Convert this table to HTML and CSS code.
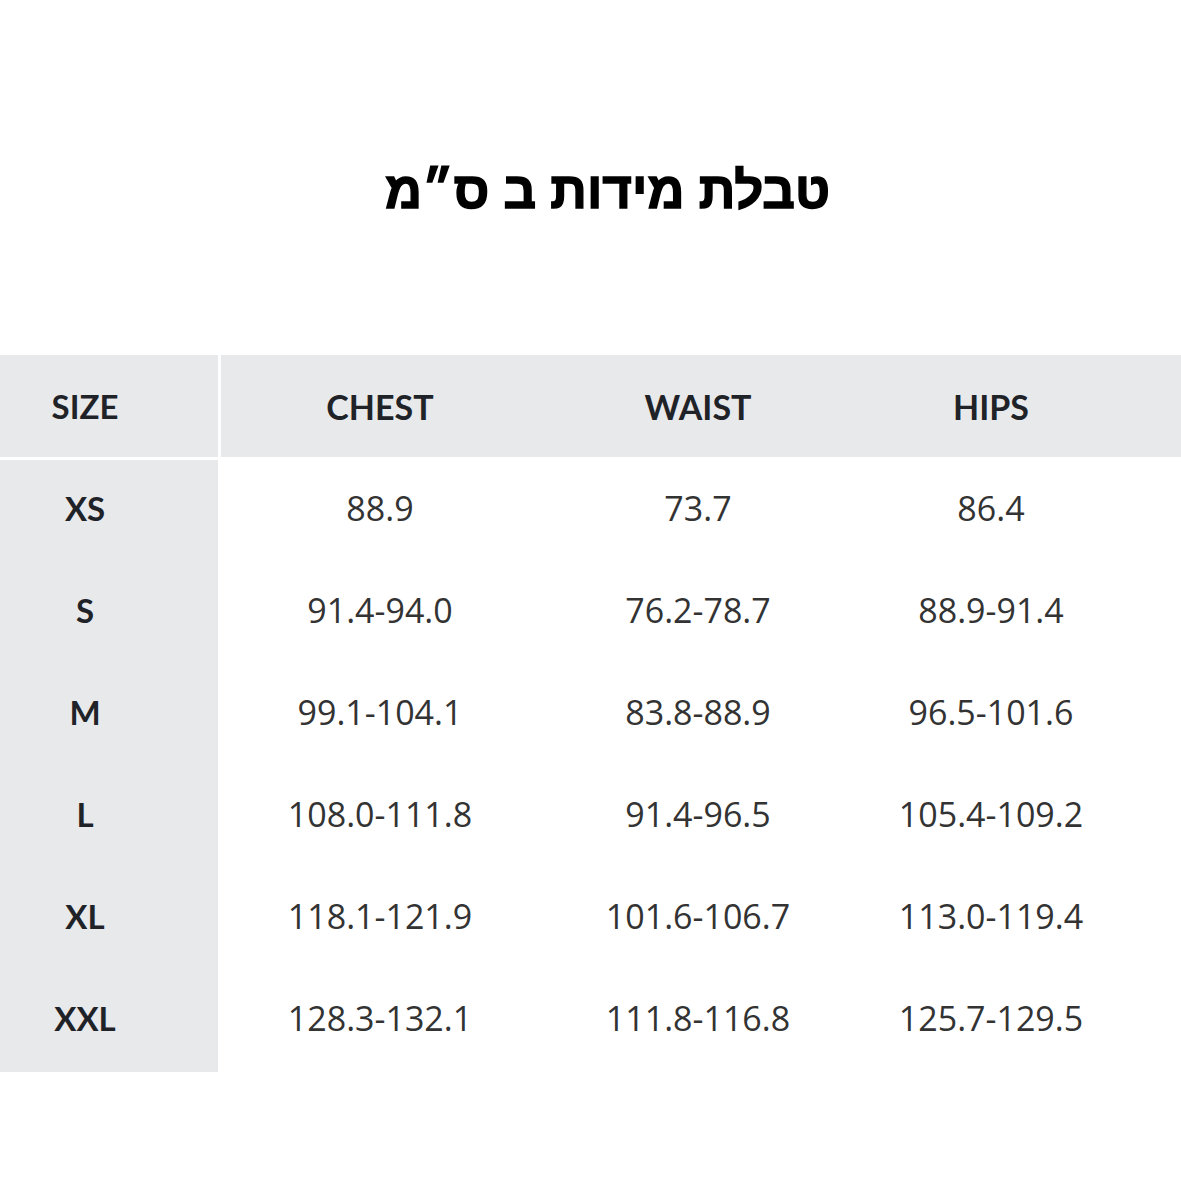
FILE: index.html
```html
<!DOCTYPE html>
<html lang="he">
<head>
<meta charset="utf-8">
<link rel="stylesheet" href="styles.css">
</head>
<body>
<div class="page">
  <h1 class="title" dir="rtl">טבלת מידות ב ס״מ</h1>
  <div class="table">
    <div class="row head">
      <div class="size">SIZE</div>
      <div class="vals">
        <div class="c1">CHEST</div>
        <div class="c2">WAIST</div>
        <div class="c3">HIPS</div>
      </div>
    </div>
    <div class="body">
      <div class="row"><div class="size">XS</div><div class="vals"><div class="c1">88.9</div><div class="c2">73.7</div><div class="c3">86.4</div></div></div>
      <div class="row"><div class="size">S</div><div class="vals"><div class="c1">91.4-94.0</div><div class="c2">76.2-78.7</div><div class="c3">88.9-91.4</div></div></div>
      <div class="row"><div class="size">M</div><div class="vals"><div class="c1">99.1-104.1</div><div class="c2">83.8-88.9</div><div class="c3">96.5-101.6</div></div></div>
      <div class="row"><div class="size">L</div><div class="vals"><div class="c1">108.0-111.8</div><div class="c2">91.4-96.5</div><div class="c3">105.4-109.2</div></div></div>
      <div class="row"><div class="size">XL</div><div class="vals"><div class="c1">118.1-121.9</div><div class="c2">101.6-106.7</div><div class="c3">113.0-119.4</div></div></div>
      <div class="row"><div class="size">XXL</div><div class="vals"><div class="c1">128.3-132.1</div><div class="c2">111.8-116.8</div><div class="c3">125.7-129.5</div></div></div>
    </div>
  </div>
</div>
</body>
</html>
```
FILE: styles.css
```css
html, body {
  margin: 0;
  padding: 0;
  background: #ffffff;
}
.page {
  width: 1181px;
  height: 1181px;
  display: flex;
  flex-direction: column;
}
.title {
  margin: 158px 0 0 0;
  padding-left: 34px;
  height: 66px;
  line-height: 66px;
  text-align: center;
  font-family: "Liberation Sans", "DejaVu Sans", sans-serif;
  font-weight: 700;
  font-size: 51px;
  color: #000;
  -webkit-text-stroke: 1.4px #000;
}
.table {
  margin-top: 131px;
  display: flex;
  flex-direction: column;
  gap: 3px;
}
.row {
  display: flex;
  height: 102px;
  align-items: stretch;
}
.size {
  width: 170px;
  padding-right: 48px;
  margin-right: 3px;
  background: #e8e9eb;
  display: flex;
  align-items: center;
  justify-content: center;
  font-family: Lato, "Liberation Sans", sans-serif;
  font-weight: 700;
  font-size: 33px;
  color: #1f2328;
}
.body .size {
  padding-bottom: 6px;
  height: 96px;
}
.vals {
  flex: 1;
  display: flex;
}
.vals > div {
  display: flex;
  align-items: center;
  justify-content: center;
}
.c1 { width: 318px; }
.c2 { width: 318px; }
.c3 { width: 268px; }
.head .vals {
  background: #e8e9eb;
  font-family: Lato, "Liberation Sans", sans-serif;
  font-weight: 700;
  font-size: 34px;
  color: #1f2328;
}
.body .vals {
  font-family: "Open Sans", "Noto Sans", sans-serif;
  font-size: 34px;
  color: #333333;
}
.body .vals > div {
  padding-bottom: 6px;
}
.body {
  display: flex;
  flex-direction: column;
}
```
